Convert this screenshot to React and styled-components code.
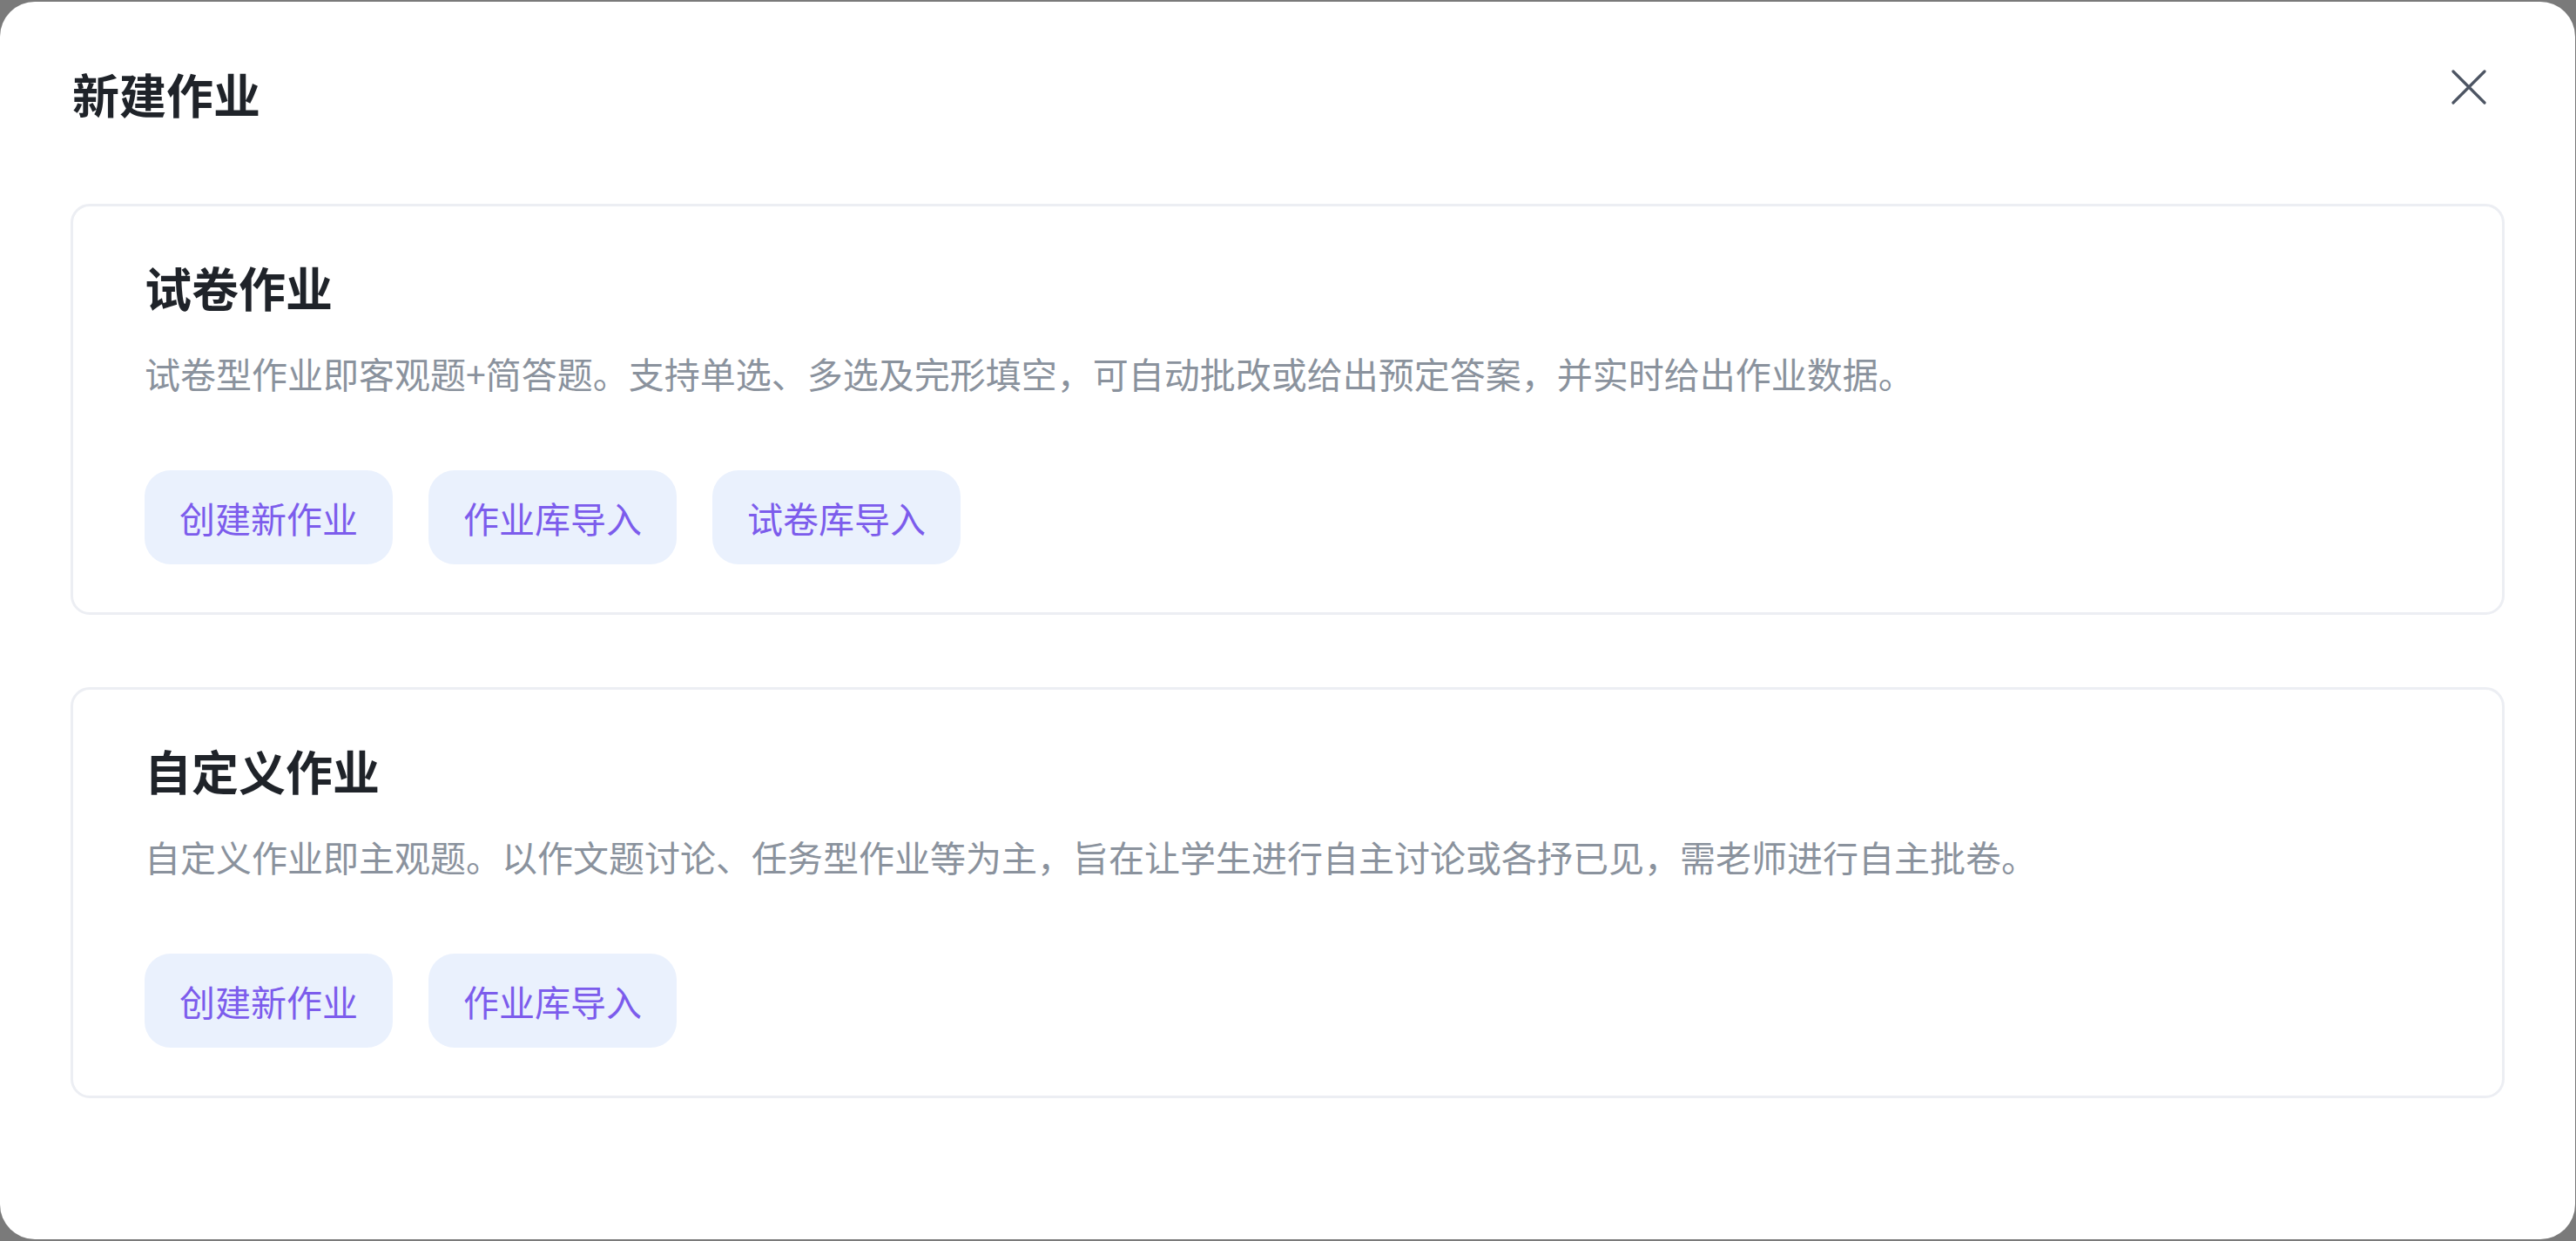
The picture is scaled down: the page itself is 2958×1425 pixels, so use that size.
import styled, { createGlobalStyle } from "styled-components";

const GlobalStyle = createGlobalStyle`
  html, body {
    margin: 0;
    padding: 0;
    height: 100%;
  }
  body {
    background: #7a7a7a;
    font-family: "Noto Sans CJK SC", "Noto Sans", sans-serif;
  }
  #root {
    height: 100%;
  }
`;

const sections = [
  {
    id: 1,
    title: "试卷作业",
    desc: "试卷型作业即客观题+简答题。支持单选、多选及完形填空，可自动批改或给出预定答案，并实时给出作业数据。",
    actions: ["创建新作业", "作业库导入", "试卷库导入"],
  },
  {
    id: 2,
    title: "自定义作业",
    desc: "自定义作业即主观题。以作文题讨论、任务型作业等为主，旨在让学生进行自主讨论或各抒已见，需老师进行自主批卷。",
    actions: ["创建新作业", "作业库导入"],
  },
];

const Backdrop = styled.div`
  height: 100vh;
  box-sizing: border-box;
  padding: 2px 1px 2px 0;
  display: flex;
`;

const Modal = styled.div`
  flex: 1;
  background: #fff;
  border-radius: 40px;
  box-sizing: border-box;
  padding: 68px 81px 0 81px;
  display: flex;
  flex-direction: column;
`;

const Header = styled.div`
  display: flex;
  justify-content: space-between;
  align-items: flex-start;
  padding-left: 2px;
  margin-bottom: 88px;
`;

const ModalTitle = styled.h2`
  margin: 0;
  font-size: 54px;
  line-height: 76px;
  font-weight: 700;
  color: #1f2329;
`;

const CloseButton = styled.button`
  width: 72px;
  height: 72px;
  margin: -6px 5px 0 0;
  padding: 0;
  border: none;
  background: transparent;
  display: flex;
  align-items: center;
  justify-content: center;
  cursor: pointer;
`;

const Cards = styled.div`
  display: flex;
  flex-direction: column;
  gap: 83px;
`;

const Card = styled.div`
  border: 3px solid #eceef3;
  border-radius: 22px;
  padding: 55px 82px 55px 82px;
`;

const CardTitle = styled.h3`
  margin: 0;
  font-size: 54px;
  line-height: 76px;
  font-weight: 700;
  color: #1f2329;
`;

const CardDesc = styled.p`
  margin: 31px 0 0 0;
  font-size: 41px;
  line-height: 58px;
  color: #8a929d;
`;

const Actions = styled.div`
  display: flex;
  gap: 41px;
  margin-top: 83px;
`;

const ActionButton = styled.button`
  height: 108px;
  padding: 0 40px;
  border: none;
  border-radius: 30px;
  background: #eaf1fd;
  color: #7c5cec;
  font-family: "Noto Sans CJK SC", "Noto Sans", sans-serif;
  font-size: 41px;
  cursor: pointer;
`;

function CloseIcon() {
  return (
    <svg width="40" height="40" viewBox="0 0 40 40" fill="none">
      <path
        d="M2 2L38 38M38 2L2 38"
        stroke="#4d5563"
        strokeWidth="3.2"
        strokeLinecap="round"
      />
    </svg>
  );
}

export default function App() {
  return (
    <>
      <GlobalStyle />
      <Backdrop>
        <Modal>
          <Header>
            <ModalTitle>新建作业</ModalTitle>
            <CloseButton aria-label="关闭">
              <CloseIcon />
            </CloseButton>
          </Header>
          <Cards>
            {sections.map((s) => (
              <Card key={s.id}>
                <CardTitle>{s.title}</CardTitle>
                <CardDesc>{s.desc}</CardDesc>
                <Actions>
                  {s.actions.map((a) => (
                    <ActionButton key={a}>{a}</ActionButton>
                  ))}
                </Actions>
              </Card>
            ))}
          </Cards>
        </Modal>
      </Backdrop>
    </>
  );
}
